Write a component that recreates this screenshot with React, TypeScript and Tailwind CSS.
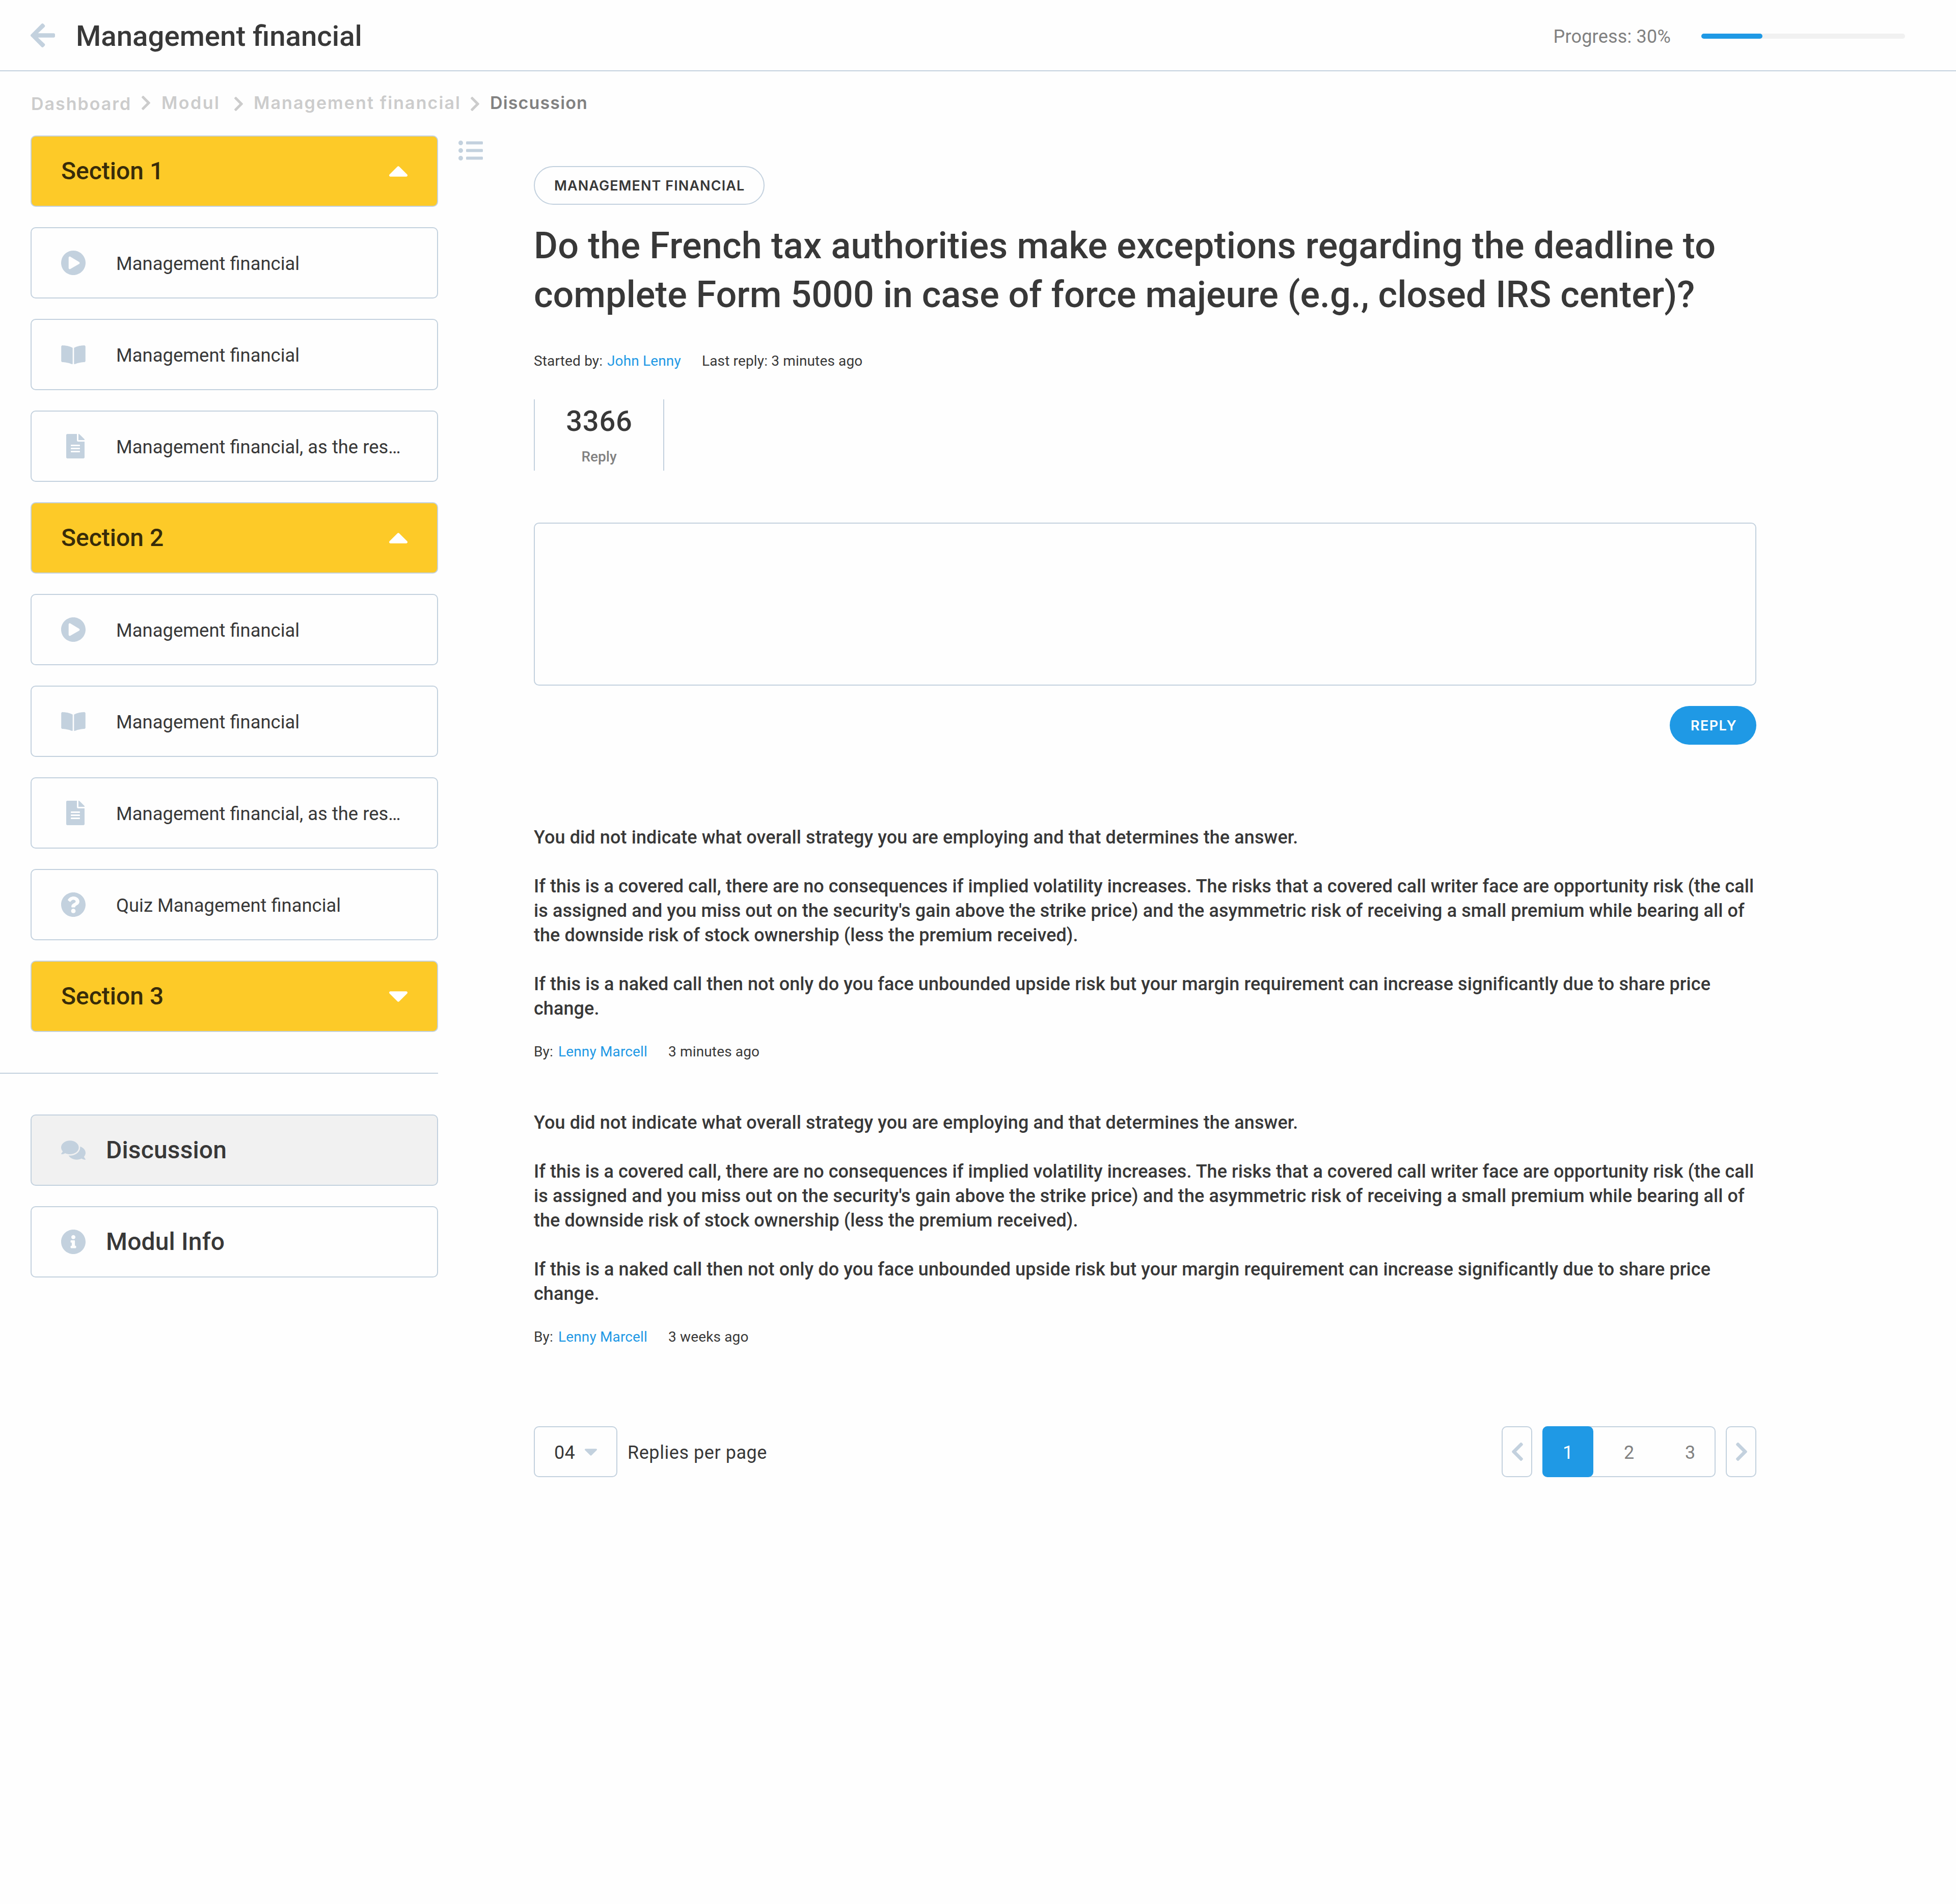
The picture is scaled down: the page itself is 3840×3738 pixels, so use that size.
import React from "react";
import {
  FaArrowLeft,
  FaBookOpen,
  FaCaretDown,
  FaCaretUp,
  FaChevronLeft,
  FaChevronRight,
  FaComments,
  FaFileAlt,
  FaInfoCircle,
  FaListUl,
  FaPlayCircle,
  FaQuestionCircle,
} from "react-icons/fa";

type ItemKind = "video" | "book" | "doc" | "quiz";

// View boxes trimmed to the drawn shape of each icon
const UP_BOX = "11.3 183.3 297.4 168.7";
const DOWN_BOX = "11.3 192 297.4 168.7";
const CHEVRON_BOX = "27.5 37.7 265 436.7";

function ItemIcon({ kind }: { kind: ItemKind }) {
  if (kind === "video") return <FaPlayCircle viewBox="8 8 496 496" className="h-12 w-12" />;
  if (kind === "book") return <FaBookOpen viewBox="0 32 576 448" className="h-[37px] w-12" />;
  if (kind === "doc") return <FaFileAlt viewBox="0 0 384 512" className="ml-[10px] h-12 w-9" />;
  return <FaQuestionCircle viewBox="8 8 496 496" className="h-12 w-12" />;
}

function SectionCard({ title, open }: { title: string; open: boolean }) {
  return (
    <div className="flex h-[140px] w-[800px] items-center justify-between rounded-[10px] border-2 border-[#c3d1de] bg-[#fdca28] px-[58px]">
      <span className="pb-px text-[48px] leading-[57px] font-medium text-[#382c09]">{title}</span>
      {open ? (
        <FaCaretUp viewBox={UP_BOX} className="h-[21px] w-9 text-white" />
      ) : (
        <FaCaretDown viewBox={DOWN_BOX} className="h-[21px] w-9 text-white" />
      )}
    </div>
  );
}

function ItemCard({ kind, label }: { kind: ItemKind; label: string }) {
  return (
    <div className="flex h-[140px] w-[800px] items-center rounded-[10px] border-2 border-[#c3d1de] pl-[58px]">
      <span className="w-[108px] text-[#c3d1de]">
        <ItemIcon kind={kind} />
      </span>
      <span className="pt-1 text-[36.4px] leading-[48px]">{label}</span>
    </div>
  );
}

function LinkCard({ icon, label, active }: { icon: React.ReactNode; label: string; active?: boolean }) {
  return (
    <div
      className={
        "flex h-[140px] w-[800px] items-center rounded-[10px] border-2 border-[#c3d1de] pl-[58px] " +
        (active ? "bg-[#f1f1f1]" : "bg-transparent")
      }
    >
      <span className="w-[88px] text-[#c3d1de]">{icon}</span>
      <span className="pb-px text-[48px] leading-[57px] font-medium tracking-[0.15px]">{label}</span>
    </div>
  );
}

function Post({ time }: { time: string }) {
  return (
    <article>
      <div className="space-y-12 text-[36px] leading-[48px] font-medium tracking-[0.04px] whitespace-nowrap">
        <p className="tracking-[0.11px]">
          You did not indicate what overall strategy you are employing and that determines the answer.
        </p>
        <p>
          If this is a covered call, there are no consequences if implied volatility increases. The risks that a covered
          call writer face are opportunity risk (the call
          <br />
          <span className="tracking-[0.085px]">
            is assigned and you miss out on the security's gain above the strike price) and the asymmetric risk of
            receiving a small premium while bearing all of
          </span>
          <br />
          the downside risk of stock ownership (less the premium received).
        </p>
        <p className="tracking-[0.08px]">
          If this is a naked call then not only do you face unbounded upside risk but your margin requirement can
          increase significantly due to share price
          <br />
          change.
        </p>
      </div>
      <div className="mt-10 flex text-[28px] leading-[41px] tracking-[0.15px]">
        <span className="w-12">By:</span>
        <span className="w-[216px] text-[#1f99e5]">Lenny Marcell</span>
        <span>{time}</span>
      </div>
    </article>
  );
}

export default function App() {
  return (
    <div className="min-h-[3738px] w-[3840px] bg-[#fefefe] font-[Roboto,sans-serif] text-[#383838]">
      <header className="flex h-[140px] items-center border-b-2 border-[#c3d1de] pr-[100px] pl-[60px]">
        <FaArrowLeft viewBox="0 37.7 448 436.7" className="h-[47px] w-12 text-[#c3d1de]" />
        <h1 className="ml-[41px] pt-1 text-[56.4px] leading-[66px] font-medium">Management financial</h1>
        <span className="mr-[60px] ml-auto pt-1.5 text-[36px] leading-[48px] tracking-[0.2px] text-[#818181]">
          Progress: 30%
        </span>
        <div className="mt-1 h-[10px] w-[400px] rounded-full bg-[#f1f1f1]">
          <div className="h-full w-[30%] rounded-full bg-[#1f99e5]" />
        </div>
      </header>

      <nav className="flex h-[126px] items-center pb-0.5 pl-[61px] font-[Inter,sans-serif] text-[34px] leading-[41px] font-semibold whitespace-nowrap text-[#cccccc]">
        <span className="w-[217px] pt-[3px] tracking-[2px]">Dashboard</span>
        <FaChevronRight viewBox={CHEVRON_BOX} className="mr-[22px] h-7 w-[17px]" />
        <span className="w-[143px] pb-px tracking-[2.5px]">Modul</span>
        <FaChevronRight viewBox={CHEVRON_BOX} className="mt-1 mr-[21px] h-7 w-[17px]" />
        <span className="w-[426px] pb-px tracking-[2.09px]">Management financial</span>
        <FaChevronRight viewBox={CHEVRON_BOX} className="mt-1 mr-[21px] h-7 w-[17px]" />
        <span className="pb-px tracking-[1.15px] text-[#818181]">Discussion</span>
      </nav>

      <div className="flex items-start">
        <aside className="w-[860px]">
          <div className="flex flex-col gap-10 pl-[60px]">
            <SectionCard title="Section 1" open />
            <ItemCard kind="video" label="Management financial" />
            <ItemCard kind="book" label="Management financial" />
            <ItemCard kind="doc" label="Management financial, as the res…" />
            <SectionCard title="Section 2" open />
            <ItemCard kind="video" label="Management financial" />
            <ItemCard kind="book" label="Management financial" />
            <ItemCard kind="doc" label="Management financial, as the res…" />
            <ItemCard kind="quiz" label="Quiz Management financial" />
            <SectionCard title="Section 3" open={false} />
          </div>
          <div className="my-20 h-0.5 bg-[#c3d1de]" />
          <div className="flex flex-col gap-10 pl-[60px]">
            <LinkCard
              active
              label="Discussion"
              icon={<FaComments viewBox="0 32 576 448" className="h-[38px] w-12" />}
            />
            <LinkCard label="Modul Info" icon={<FaInfoCircle viewBox="8 8 496 496" className="h-12 w-12" />} />
          </div>
        </aside>

        <FaListUl viewBox="0 48 512 416" className="mt-[10px] ml-10 h-[39px] w-12 text-[#c3d1de]" />

        <main className="ml-[100px] w-[2400px] pt-[60px]">
          <div className="flex h-[76px] w-[453px] items-center rounded-full border-2 border-[#c3d1de] pl-[38px]">
            <span className="pt-px font-[Inter,sans-serif] text-[27px] leading-[33px] font-semibold tracking-[1.07px] whitespace-nowrap">
              MANAGEMENT FINANCIAL
            </span>
          </div>

          <h2 className="mt-[33px] text-[72px] leading-[96px] font-medium tracking-[0.15px] whitespace-nowrap">
            Do the French tax authorities make exceptions regarding the deadline to
            <br />
            <span className="tracking-[-0.04px]">
              complete Form 5000 in case of force majeure (e.g., closed IRS center)?
            </span>
          </h2>

          <div className="mt-[61px] flex text-[28px] leading-[41px] tracking-[0.15px]">
            <span className="w-[144px]">Started by:</span>
            <span className="w-[186px] text-[#1f99e5]">John Lenny</span>
            <span>Last reply: 3 minutes ago</span>
          </div>

          <div className="mt-[55px] flex h-[140px] w-64 flex-col items-center border-x-2 border-[#c3d1de] pt-[11px]">
            <span className="pl-px text-[56px] leading-[64px] font-medium tracking-[0.8px]">3366</span>
            <span className="mt-[17px] text-[28px] leading-[41px] font-medium text-[#818181]">Reply</span>
          </div>

          <textarea className="mt-[102px] block h-80 w-full resize-none rounded-[10px] border-2 border-[#c3d1de] bg-transparent" />

          <button className="mt-10 ml-auto flex h-[76px] w-[170px] items-center rounded-full bg-[#1f99e5] pl-[41px]">
            <span className="pt-px font-[Inter,sans-serif] text-[27px] leading-[33px] font-semibold tracking-[1.4px] text-white">
              REPLY
            </span>
          </button>

          <div className="mt-[158px] flex flex-col gap-[95px]">
            <Post time="3 minutes ago" />
            <Post time="3 weeks ago" />
          </div>

          <div className="mt-[155px] flex h-[100px] items-center text-[36px] leading-[48px]">
            <div className="flex h-[100px] w-[164px] items-center rounded-[10px] border-2 border-[#c3d1de] pl-[38px]">
              <span className="pt-1 tracking-[0.3px]">04</span>
              <FaCaretDown viewBox={DOWN_BOX} className="mt-0.5 ml-[19px] h-[14px] w-6 text-[#c3d1de]" />
            </div>
            <span className="ml-5 pt-1 tracking-[0.55px]">Replies per page</span>

            <div className="ml-auto flex gap-5 text-[#818181]">
              <button className="flex h-[100px] w-[60px] items-center rounded-[10px] border-2 border-[#c3d1de] pl-[18px]">
                <FaChevronLeft viewBox={CHEVRON_BOX} className="h-9 w-[22px] text-[#c3d1de]" />
              </button>
              <div className="flex h-[100px] w-[340px] items-center rounded-[10px] border-2 border-[#c3d1de]">
                <span className="-my-0.5 -ml-0.5 flex h-[100px] w-[100px] shrink-0 items-center justify-center rounded-[10px] bg-[#1f99e5] pt-1 text-white">
                  1
                </span>
                <span className="w-[140px] shrink-0 pt-1 text-center">2</span>
                <span className="w-[98px] shrink-0 pt-1 pl-0.5 text-center">3</span>
              </div>
              <button className="flex h-[100px] w-[60px] items-center rounded-[10px] border-2 border-[#c3d1de] pl-[18px]">
                <FaChevronRight viewBox={CHEVRON_BOX} className="h-9 w-[22px] text-[#c3d1de]" />
              </button>
            </div>
          </div>
        </main>
      </div>
    </div>
  );
}
